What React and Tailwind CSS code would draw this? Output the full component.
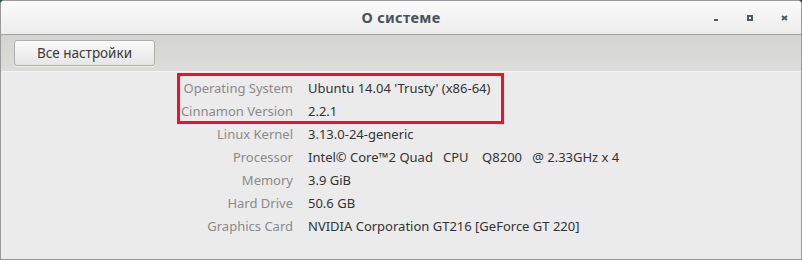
import React from 'react';

const rows = [
  ['Operating System', "Ubuntu 14.04 'Trusty' (x86-64)"],
  ['Cinnamon Version', '2.2.1'],
  ['Linux Kernel', '3.13.0-24-generic'],
  ['Processor', 'Intel\u00a9 Core\u21222 Quad   CPU    Q8200   @ 2.33GHz x 4'],
  ['Memory', '3.9 GiB'],
  ['Hard Drive', '50.6 GB'],
  ['Graphics Card', 'NVIDIA Corporation GT216 [GeForce GT 220]'],
];

const font = { fontFamily: '"Noto Sans", "DejaVu Sans", sans-serif' };

const App = () => {
  return (
    <div className="w-[802px] h-[260px] bg-[#1e4d47]" style={font}>
      <div className="h-full flex flex-col border border-[#9a9a9a] rounded-t-[4px] overflow-hidden bg-[#ebebeb]">
        {/* title bar */}
        <div className="h-[34px] shrink-0 relative flex items-center justify-center bg-gradient-to-b from-[#fbfbfb] to-[#ececec] border-b border-[#a3a3a3]">
          <span className="text-[14.5px] font-bold text-[#47535a] tracking-[0.3px]">О системе</span>
          <div className="absolute right-0 top-0 h-full flex items-center">
            <div className="w-[4px] h-[2px] bg-[#4c5a62] mt-[5px] mr-[29px]" />
            <div className="w-[6px] h-[6px] border-2 border-[#4c5a62] mr-[28px] mt-[1px]" />
            <svg width="7" height="6" viewBox="0 0 7 6" className="mr-[13px] mt-[1px]">
              <path d="M1 1 L6 5 M6 1 L1 5" stroke="#4c5a62" strokeWidth="2" />
            </svg>
          </div>
        </div>

        {/* toolbar */}
        <div className="h-[37px] shrink-0 flex items-center px-[13px] bg-gradient-to-b from-[#d4d5d1] to-[#dcddd9] border-b border-[#f4f4f4]">
          <button className="w-[141px] h-[26px] rounded-[3px] border border-[#aeaeae] bg-gradient-to-b from-[#fafafa] to-[#e6e6e6] text-[13.5px] text-[#3a3a3a] shadow-[0_1px_0_rgba(255,255,255,0.6)]">
            Все настройки
          </button>
        </div>

        {/* content */}
        <div className="relative flex-1 pt-[5px]">
          <div className="grid grid-cols-[292px_1fr] gap-x-[15px] text-[13px]">
            {rows.map(([label, value]) => (
              <React.Fragment key={label}>
                <div className="h-[23px] flex items-center justify-end text-[#8a8a8a]">{label}</div>
                <div className="h-[23px] flex items-center text-[#333333] whitespace-pre">{value}</div>
              </React.Fragment>
            ))}
          </div>
          {/* annotation */}
          <div className="absolute left-[176px] top-[1px] w-[327px] h-[51px] border-[3px] border-[#f0102e] pointer-events-none" />
        </div>
      </div>
    </div>
  );
};

export default App;
